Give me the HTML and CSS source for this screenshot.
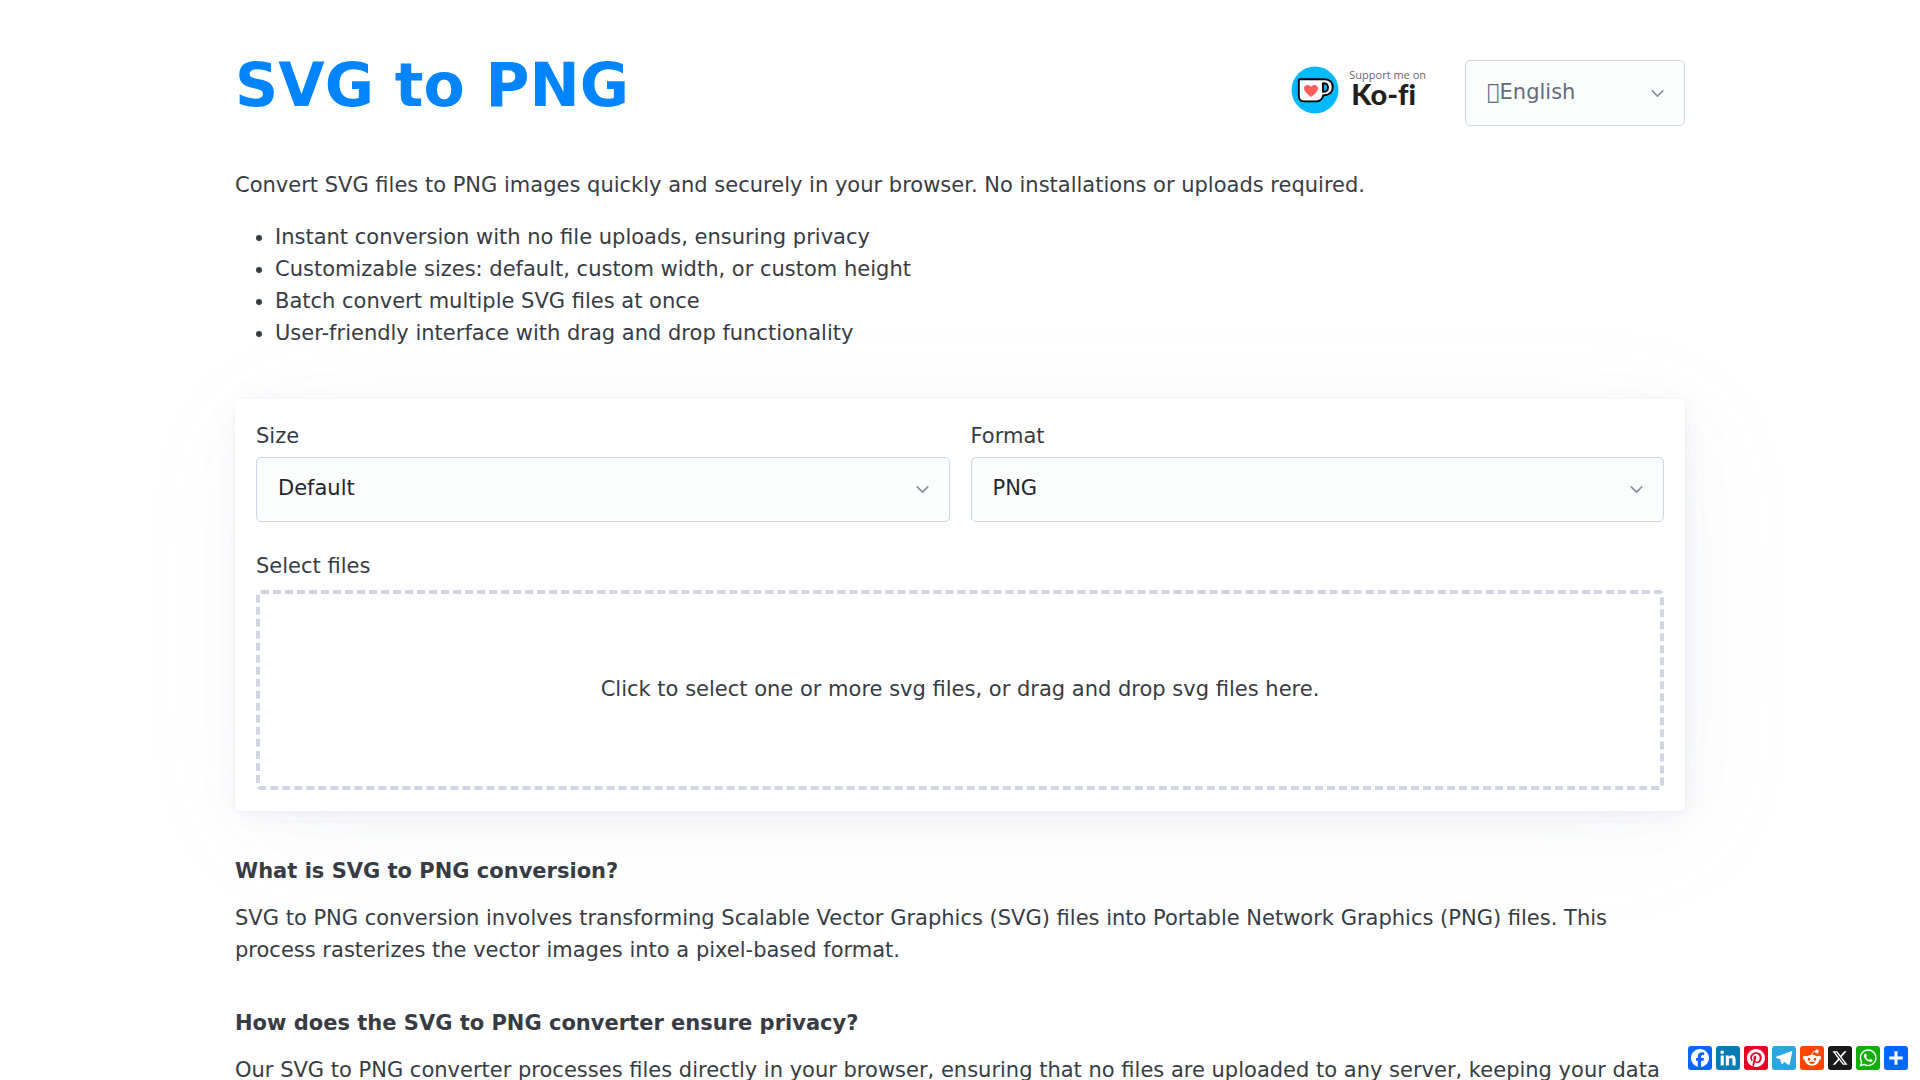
FILE: index.html
```html
<!DOCTYPE html>
<html lang="en">
<head>
  <meta charset="UTF-8">
  <meta name="viewport" content="width=device-width, initial-scale=1">
  <title>SVG to PNG</title>
  <link rel="stylesheet" href="styles.css">
</head>
<body>
  <div class="container">
    <header class="top-bar">
      <h1>SVG to PNG</h1>
      <div class="top-actions">
        <a class="kofi" href="#kofi">
          <svg class="kofi-logo" viewBox="0 0 48 48" aria-hidden="true">
            <circle cx="24" cy="24" r="23.5" fill="#00b9fe"/>
            <path d="M9 13.200h24.700c5.200 0 8 3.500 8 7.900 0 4.900-3.500 8.100-8.600 8.100h-.8c-.8 4.300-3 6.200-6.900 6.200H13.500c-3.700 0-5.700-2-5.700-5.500V14.400c0-.8.4-1.200 1.200-1.200z" fill="#fff" stroke="#000" stroke-width="1.900" stroke-linejoin="round"/>
            <path d="M32 17.300v8.500c3.300.2 5-1.400 5-4.300s-1.700-4.400-5-4.200z" fill="#00b9fe" stroke="#000" stroke-width="1.900" stroke-linejoin="round"/>
            <path d="M20 31c-2.300-1.800-7-5.300-7-8.700 0-3.500 4.500-4.700 7-1.600 2.500-3.100 7-1.900 7 1.600 0 3.400-4.700 6.900-7 8.700z" fill="#ff5e5b"/>
          </svg>
          <span class="kofi-text">
            <span class="kofi-small">Support me on</span>
            <span class="kofi-name">Ko-fi</span>
          </span>
        </a>
        <select class="lang" aria-label="Language">
          <option>&#xF1AB;English</option>
        </select>
      </div>
    </header>

    <main>
      <p>Convert SVG files to PNG images quickly and securely in your browser. No installations or uploads required.</p>
      <ul class="features">
        <li>Instant conversion with no file uploads, ensuring privacy</li>
        <li>Customizable sizes: default, custom width, or custom height</li>
        <li>Batch convert multiple SVG files at once</li>
        <li>User-friendly interface with drag and drop functionality</li>
      </ul>

      <form class="card">
        <div class="row">
          <div class="field">
            <label for="size">Size</label>
            <select id="size">
              <option>Default</option>
            </select>
          </div>
          <div class="field">
            <label for="format">Format</label>
            <select id="format">
              <option>PNG</option>
            </select>
          </div>
        </div>
        <label class="files-label" for="dropzone">Select files</label>
        <button type="button" class="dropzone" id="dropzone">Click to select one or more svg files, or drag and drop svg files here.</button>
      </form>

      <section class="faq">
        <h2>What is SVG to PNG conversion?</h2>
        <p>SVG to PNG conversion involves transforming Scalable Vector Graphics (SVG) files into Portable Network Graphics (PNG) files. This process rasterizes the vector images into a pixel-based format.</p>
        <h2>How does the SVG to PNG converter ensure privacy?</h2>
        <p>Our SVG to PNG converter processes files directly in your browser, ensuring that no files are uploaded to any server, keeping your data</p>
      </section>
    </main>
  </div>

  <nav class="share" aria-label="Share">
    <a class="facebook" href="#facebook" aria-label="Facebook"><svg viewBox="0 0 32 32"><path d="M28 16c0-6.627-5.373-12-12-12S4 9.373 4 16c0 5.628 3.875 10.35 9.101 11.647v-7.98h-2.474V16H13.1v-1.58c0-4.085 1.849-5.978 5.859-5.978.76 0 2.072.15 2.608.298v3.325c-.283-.03-.775-.045-1.386-.045-1.967 0-2.728.745-2.728 2.683V16h3.92l-.673 3.667h-3.247v8.245C23.395 27.195 28 22.135 28 16"/></svg></a>
    <a class="linkedin" href="#linkedin" aria-label="LinkedIn"><svg viewBox="0 0 32 32"><path d="M6.227 12.61h4.19v13.48h-4.19zm2.095-6.7a2.43 2.43 0 0 1 0 4.86c-1.344 0-2.428-1.09-2.428-2.43s1.084-2.43 2.428-2.43m4.72 6.7h4.02v1.84h.058c.56-1.058 1.927-2.176 3.965-2.176 4.238 0 5.02 2.792 5.02 6.42v7.395h-4.183v-6.56c0-1.564-.03-3.574-2.178-3.574-2.18 0-2.514 1.7-2.514 3.46v6.668h-4.187z"/></svg></a>
    <a class="pinterest" href="#pinterest" aria-label="Pinterest"><svg viewBox="0 0 32 32"><path d="M15.995 4C9.361 4 4 9.37 4 15.995c0 5.084 3.16 9.428 7.622 11.176-.109-.948-.198-2.41.039-3.446.217-.938 1.402-5.963 1.402-5.963s-.356-.721-.356-1.777c0-1.668.968-2.912 2.172-2.912 1.027 0 1.52.77 1.52 1.688 0 1.027-.65 2.567-.996 3.998-.287 1.195.602 2.172 1.777 2.172 2.132 0 3.771-2.25 3.771-5.489 0-2.873-2.063-4.877-5.015-4.877-3.416 0-5.42 2.557-5.42 5.203 0 1.027.395 2.132.888 2.735a.36.36 0 0 1 .08.345c-.09.375-.297 1.195-.336 1.363-.05.217-.178.266-.405.158-1.481-.711-2.409-2.903-2.409-4.66 0-3.781 2.745-7.257 7.928-7.257 4.156 0 7.394 2.962 7.394 6.931 0 4.137-2.606 7.464-6.22 7.464-1.214 0-2.36-.632-2.744-1.383l-.75 2.854c-.267 1.046-.998 2.35-1.491 3.149a12 12 0 0 0 3.554.533C22.629 28 28 22.63 28 15.995 27.99 9.37 22.62 4 15.995 4"/></svg></a>
    <a class="telegram" href="#telegram" aria-label="Telegram"><svg viewBox="0 0 32 32"><path d="M25.515 6.896 6.027 14.41c-1.33.534-1.322 1.276-.243 1.606l5 1.56 1.72 5.66c.226.625.115.873.77.873.506 0 .73-.235 1.012-.51l2.43-2.363 5.056 3.734c.93.514 1.602.25 1.834-.863l3.32-15.638c.338-1.363-.52-1.98-1.41-1.577z"/></svg></a>
    <a class="reddit" href="#reddit" aria-label="Reddit"><svg viewBox="0 0 32 32">
      <circle cx="6.800" cy="15.800" r="2.900"/><circle cx="25.200" cy="15.800" r="2.900"/><circle cx="22.500" cy="7.200" r="2.500"/>
      <path d="M16 12c.2-3.300 1.800-5 5-5" fill="none" stroke="#fff" stroke-width="1.300"/>
      <ellipse cx="16" cy="19" rx="9.500" ry="7.300"/>
      <ellipse class="cut" cx="12" cy="17.600" rx="1.700" ry="2"/><ellipse class="cut" cx="20" cy="17.600" rx="1.700" ry="2"/>
      <path class="cut" d="M11.800 21.400c2.800-.5 5.600-.5 8.400 0-.8 3.400-7.600 3.400-8.400 0z"/>
    </svg></a>
    <a class="x" href="#x" aria-label="X"><svg viewBox="0 0 32 32"><path d="M21.751 7h3.067l-6.7 7.658L26 25.078h-6.172l-4.833-6.32-5.531 6.32h-3.07l7.167-8.19L6 7h6.328l4.37 5.777zm-1.076 16.242h1.7L11.404 8.74H9.58z"/></svg></a>
    <a class="whatsapp" href="#whatsapp" aria-label="WhatsApp"><svg viewBox="0 0 32 32"><path fill-rule="evenodd" d="M16.21 4.41C9.973 4.41 4.917 9.465 4.917 15.7c0 2.134.592 4.13 1.62 5.832L4.5 27.59l6.25-2.002a11.24 11.24 0 0 0 5.46 1.404c6.234 0 11.29-5.055 11.29-11.29 0-6.237-5.056-11.292-11.29-11.292m0 20.69c-1.91 0-3.69-.57-5.173-1.553l-3.61 1.156 1.173-3.49a9.35 9.35 0 0 1-1.79-5.512c0-5.18 4.217-9.4 9.4-9.4s9.397 4.22 9.397 9.4c0 5.188-4.214 9.4-9.398 9.4zm5.293-6.832c-.284-.155-1.673-.906-1.934-1.012-.265-.106-.455-.16-.658.12s-.78.91-.954 1.096c-.176.186-.345.203-.628.048-.282-.154-1.2-.494-2.264-1.517-.83-.795-1.373-1.76-1.53-2.055s0-.445.15-.584c.134-.124.3-.326.45-.488.15-.163.203-.28.306-.47.104-.19.06-.36-.005-.506-.066-.147-.59-1.587-.81-2.173-.218-.586-.46-.498-.63-.505-.168-.007-.358-.038-.55-.045-.19-.007-.51.054-.78.332-.277.274-1.05.943-1.1 2.362-.055 1.418.926 2.826 1.064 3.023.137.2 1.874 3.272 4.76 4.537 2.888 1.264 2.9.878 3.43.85.53-.027 1.734-.633 2-1.297s.287-1.24.22-1.363c-.07-.123-.26-.19-.54-.345z"/></svg></a>
    <a class="more" href="#more" aria-label="More"><svg viewBox="0 0 32 32"><path d="M14 7h4v18h-4z"/><path d="M7 14h18v4H7z"/></svg></a>
  </nav>
</body>
</html>
```
FILE: styles.css
```css
* { box-sizing: border-box; margin: 0; padding: 0; }
body { font-family: "DejaVu Sans", sans-serif; font-size: 21px; line-height: 32px; color: #373c44; background: #fff; }
.container { max-width: 1450px; margin: 0 auto; padding-top: 60px; }

.top-bar { display: flex; justify-content: space-between; align-items: flex-start; margin-bottom: 43px; }
h1 { font-size: 60px; line-height: 50px; color: #0085ff; }
.top-actions { display: flex; align-items: flex-start; gap: 39px; }
.kofi { display: flex; align-items: center; gap: 10px; padding-top: 6px; color: #231f20; text-decoration: none; }
.kofi-logo { width: 48px; height: 48px; }
.kofi-text { display: flex; flex-direction: column; padding-bottom: 4px; font-family: Lato, sans-serif; }
.kofi-small { font-family: "Open Sans", sans-serif; font-size: 11px; line-height: 12px; color: #666; }
.kofi-name { padding-left: 2px; font-size: 29px; line-height: 26px; font-weight: 900; font-variant-ligatures: none; }

select {
  display: block; width: 100%; height: 65px; padding: 0 52px 4px 21px; appearance: none;
  font: inherit; color: #23262c; border: 1px solid #cfd5e2; border-radius: 5px;
  background: #fbfcfc url("data:image/svg+xml,%3Csvg xmlns='http://www.w3.org/2000/svg' viewBox='0 0 24 24' fill='none' stroke='rgb(136,145,164)' stroke-width='2' stroke-linecap='round' stroke-linejoin='round'%3E%3Cpolyline points='6 9 12 15 18 9'/%3E%3C/svg%3E") no-repeat right 16px center / 21px auto;
}
.lang { width: 220px; height: 66px; padding-bottom: 2px; color: #646b79; }

.features { margin: 20px 0 50px; padding-left: 40px; }

.card {
  padding: 21px; background: #fff; border-radius: 5px;
  box-shadow: 0 1px 4px rgba(129,145,181,0.017), 1px 1px 8px rgba(129,145,181,0.024),
    1px 3px 16px rgba(129,145,181,0.03), 2px 5px 28px rgba(129,145,181,0.036),
    4px 9px 53px rgba(129,145,181,0.043), 10px 21px 126px rgba(129,145,181,0.06),
    0 0 0 1px rgba(129,145,181,0.015);
}
.row { display: grid; grid-template-columns: 1fr 1fr; gap: 21px; margin-bottom: 28px; }
label { display: block; margin-bottom: 5px; }
.files-label { margin-bottom: 8px; }
.dropzone {
  display: block; width: 100%; height: 200px; padding-bottom: 2px; background: none;
  border: 4px dashed #cfd5e2; border-radius: 5px; font: inherit; color: inherit; cursor: pointer;
}

.faq { margin-top: 44px; }
h2 { font-size: 21px; line-height: 32px; margin-bottom: 15px; }
.faq p { margin-bottom: 41px; }

.share { position: fixed; right: 12px; bottom: 10px; display: flex; gap: 4px; }
.share a { width: 24px; height: 24px; border-radius: 3px; }
.share svg { display: block; fill: #fff; }
.facebook { background: #0866ff; }
.linkedin { background: #007bb5; }
.pinterest { background: #e60023; }
.telegram { background: #2ca5e0; }
.reddit { background: #ff4500; }
.reddit .cut { fill: #ff4500; }
.x { background: #1a1a1a; }
.whatsapp { background: #12af0a; }
.more { background: #0166ff; }
```
